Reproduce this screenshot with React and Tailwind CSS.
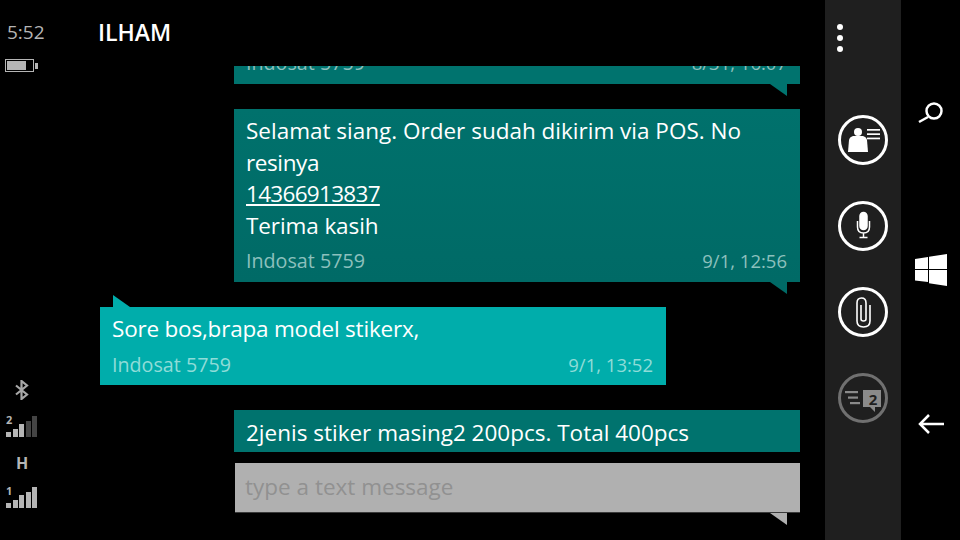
const sans = { fontFamily: '"Open Sans", "Noto Sans", sans-serif' }

function Tail({ fill, up = false, className = '' }) {
  return (
    <svg width="17" height="12" viewBox="0 0 17 12" className={className}>
      <polygon points={up ? '0,0 0,12 17,12' : '0,0 17,0 17,12'} fill={fill} />
    </svg>
  )
}

function Meta({ sender, time, className }) {
  return (
    <div className={`mt-[7px] flex items-baseline justify-between pr-[1px] leading-[26px] ${className}`}>
      <span className="text-[19.700px]">{sender}</span>
      <span className="text-[18.500px]">{time}</span>
    </div>
  )
}

function Bubble({ children, sender, time, bg, tailFill }) {
  return (
    <div className="flex flex-col">
      <div className={`flex flex-col px-3 pt-[6px] pb-[8px] ${bg}`}>
        {children}
        <Meta sender={sender} time={time} className="text-[#8cc0bd]" />
      </div>
      <Tail fill={tailFill} className="mr-[13px] self-end" />
    </div>
  )
}

function Bars({ lit, label }) {
  const heights = [5, 8, 13, 16, 21]
  return (
    <div className="relative flex h-[21px] items-end gap-[1.500px] pl-[6px]">
      <span className="absolute top-[-2px] left-[6px] text-[11px] leading-[12px] font-bold text-[#b5b5b5]">{label}</span>
      {heights.map((h, i) => (
        <div
          key={i}
          className={`w-[5px] ${i < lit ? 'bg-[#b5b5b5]' : 'bg-[#444444]'}`}
          style={{ height: h }}
        />
      ))}
    </div>
  )
}

function StatusColumn() {
  return (
    <div className="flex w-[99px] shrink-0 flex-col">
      <div className="pt-[20px] pl-[7px] text-[19px] leading-[24px] text-[#b5b5b5]">5:52</div>
      <div className="mt-[15px] ml-[5px] flex items-center gap-[1px]">
        <div className="h-[13px] w-[29px] border border-[#b5b5b5] p-[1px]">
          <div className="h-full w-[19px] bg-[#b5b5b5]" />
        </div>
        <div className="h-[6px] w-[3px] bg-[#b5b5b5]" />
      </div>
      <div className="mt-auto flex flex-col pb-[32px]">
        <svg width="16" height="20" viewBox="0 0 16 20" className="ml-[14px]" fill="none" stroke="#a8a8a8" strokeWidth="2.200">
          <path d="M2 5.500 13 14.500 7.500 19V1L13 5.500 2 14.500" />
        </svg>
        <div className="mt-[16px]"><Bars lit={3} label="2" /></div>
        <div className="mt-[18px] ml-[16px] text-[16px] leading-[16px] font-bold text-[#b5b5b5]">H</div>
        <div className="mt-[16px]"><Bars lit={5} label="1" /></div>
      </div>
    </div>
  )
}

function RoundButton({ children, muted = false }) {
  return (
    <div className={`flex h-[50px] w-[50px] items-center justify-center rounded-full border-[3px] ${muted ? 'border-[#707070]' : 'border-white'}`}>
      {children}
    </div>
  )
}

function AppBar() {
  return (
    <div className="flex w-[76px] shrink-0 flex-col items-center bg-[#1f1f1f]">
      <div className="mt-[24px] flex -translate-x-[23px] flex-col gap-[5px]">
        <div className="h-[6px] w-[6px] rounded-full bg-white" />
        <div className="h-[6px] w-[6px] rounded-full bg-white" />
        <div className="h-[6px] w-[6px] rounded-full bg-white" />
      </div>
      <div className="mt-[63px] flex flex-col gap-[36px]">
        <RoundButton>
          <svg width="38" height="30" viewBox="0 0 38 30" fill="white" className="shrink-0">
            <circle cx="14" cy="7" r="4" />
            <path d="M4 27 5 15q.5-3 4-4h10q3.500 1 4 4l1 12z" />
            <rect x="23" y="4" width="13" height="1.700" />
            <rect x="23" y="8.300" width="13" height="1.700" />
            <rect x="23" y="12.600" width="13" height="1.700" />
          </svg>
        </RoundButton>
        <RoundButton>
          <svg width="24" height="30" viewBox="0 0 24 30" fill="none" stroke="white" strokeWidth="1.500" className="shrink-0">
            <rect x="9" y="1.500" width="7" height="17" rx="3.500" fill="white" />
            <path d="M6.500 10v6q0 6 6 6t6-6v-6M12.500 22v4M8.500 26.500h8" />
          </svg>
        </RoundButton>
        <RoundButton>
          <svg width="20" height="32" viewBox="0 0 20 32" fill="none" stroke="white" strokeWidth="1.600" className="shrink-0">
            <path d="M17 9V25q0 6-6.500 6T4 25V7q0-5 4.500-5T13 7V23q0 2-2.500 2T8 23V9" />
          </svg>
        </RoundButton>
        <RoundButton muted>
          <svg width="44" height="36" viewBox="0 0 44 36" fill="#8a8a8a" className="shrink-0">
            <rect x="4" y="11" width="13" height="2.200" />
            <rect x="7" y="16.500" width="10" height="2.200" />
            <rect x="9" y="22" width="10" height="2.200" />
            <path d="M22 10h18v17H34v5l-5-5h-7z" />
            <text x="32" y="24.500" textAnchor="middle" fontSize="15" fontWeight="700" fill="#1f1f1f" style={sans}>2</text>
          </svg>
        </RoundButton>
      </div>
    </div>
  )
}

function NavColumn() {
  return (
    <div className="flex flex-1 flex-col items-center">
      <svg width="26" height="22" viewBox="0 0 26 22" className="mt-[102px]" fill="none" stroke="white" strokeWidth="2.500">
        <circle cx="16" cy="9" r="7.500" />
        <path d="M10 15 1 20" />
      </svg>
      <svg width="33" height="32" viewBox="0 0 33 32" className="mt-[130px]" fill="white">
        <path d="M1 5 14 3V15H1zM15 2.800 33 0V15H15zM1 16H14V28L1 26.500zM15 16H33V32L15 29.200z" />
      </svg>
      <svg width="26" height="20" viewBox="0 0 26 20" className="mt-[128px]" fill="none" stroke="white" strokeWidth="2.500">
        <path d="M26 10H3M11 1 2 10l9 9" />
      </svg>
    </div>
  )
}

export default function App() {
  return (
    <div className="flex h-[540px] w-[960px] overflow-hidden bg-black" style={sans}>
      <StatusColumn />
      <div className="flex w-[726px] shrink-0 flex-col">
        <div className="-ml-[1px] h-[66px] shrink-0 pt-[16px] text-[23px] leading-[32px] font-semibold text-white">ILHAM</div>
        <div className="relative min-h-0 flex-1 overflow-hidden">
          <div className="ml-[135px] w-[566px]">
            <div className="-mt-[29px]">
              <Bubble sender="Indosat 5759" time="8/31, 16:07" bg="bg-[#00736e]" tailFill="#00736e" />
            </div>
            <div className="mt-[13px]">
              <Bubble sender="Indosat 5759" time="9/1, 12:56" bg="bg-gradient-to-b from-[#00716c] to-[#006a66]" tailFill="#006a66">
                <div className="text-[22.500px] leading-[31.500px] text-white">
                  Selamat siang. Order sudah dikirim via POS. No <span className="tracking-[-0.400px]">resinya</span>
                  <br />
                  <span className="tracking-[-0.700px] underline">14366913837</span>
                  <br />
                  <span className="tracking-[-0.100px]">Terima kasih</span>
                </div>
              </Bubble>
            </div>
          </div>
          <div className="mt-[1px] ml-[1px] w-[566px]">
            <Tail fill="#00adab" up className="ml-[13px] block" />
            <div className="bg-[#00adab] px-3 pt-[6px] pb-[7.500px]">
              <div className="text-[22.500px] leading-[31.500px] tracking-[-0.200px] text-white">Sore bos,brapa model stikerx,</div>
              <Meta sender="Indosat 5759" time="9/1, 13:52" className="text-[#8fdcd8]" />
            </div>
          </div>
          <div className="mt-[25px] ml-[135px] w-[566px]">
            <div className="h-[42px] bg-[#00736e] px-3 pt-[7px] text-[22.500px] leading-[31.500px] text-white">
              2jenis stiker masing2 200pcs. Total 400pcs
            </div>
          </div>
          <div className="mt-[11px] ml-[136px] w-[565px]">
            <div className="flex h-[50px] items-center border-b border-[#3a3a3a] bg-[#b0b0b0] pb-[1px] pl-[10px] text-[22.500px] text-[#919191]">type a text message</div>
            <Tail fill="#b0b0b0" className="mr-[13px] ml-auto" />
          </div>
        </div>
      </div>
      <AppBar />
      <NavColumn />
    </div>
  )
}
